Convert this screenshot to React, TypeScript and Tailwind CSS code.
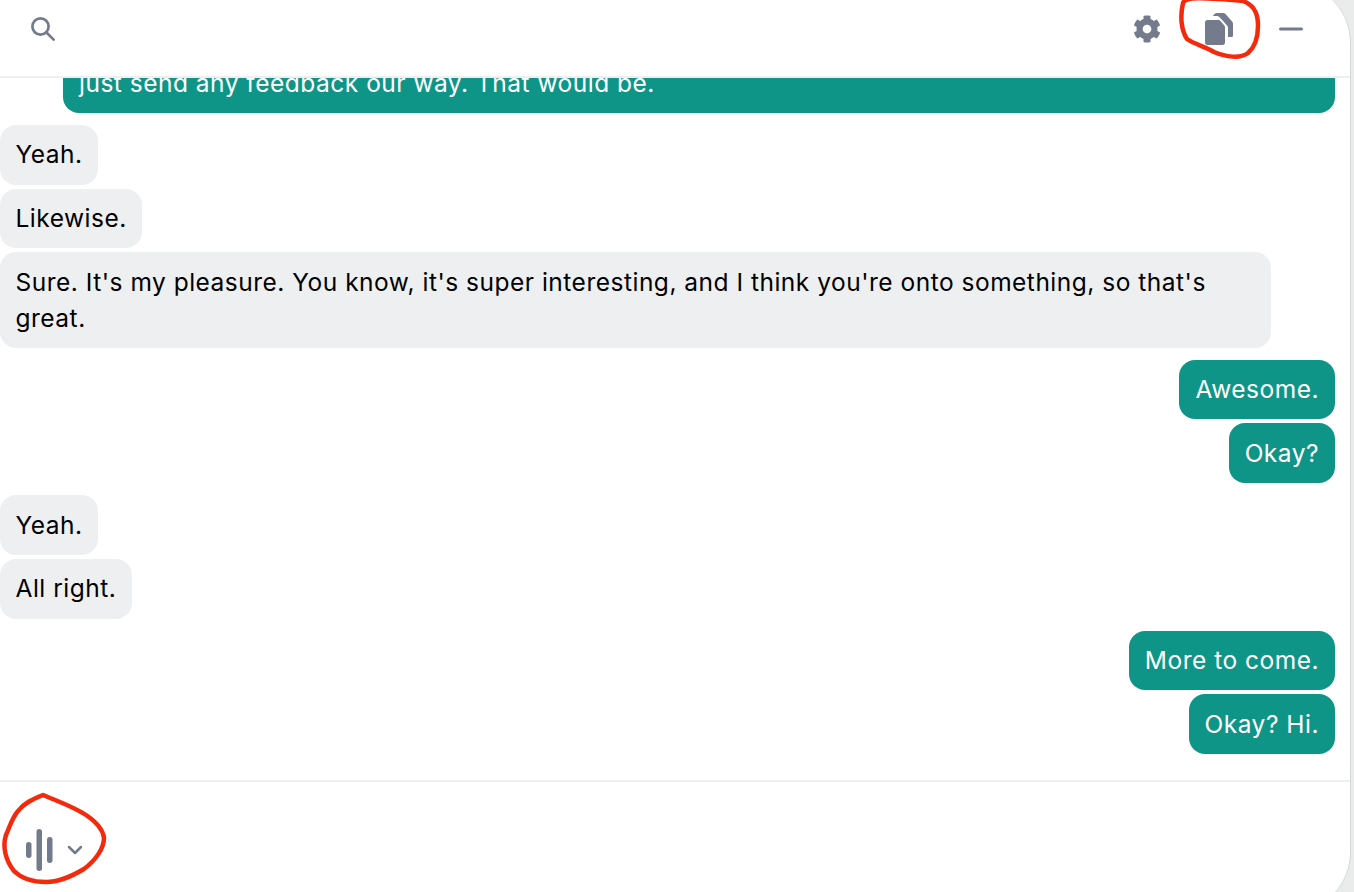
import { ChevronDown, Minus } from "lucide-react";
import { FaCog } from "react-icons/fa";

type Msg = { me: boolean; text: string };

const GROUPS: Msg[][] = [
  [{ me: false, text: "Yeah." }, { me: false, text: "Likewise." }, { me: false, text: "Sure. It's my pleasure. You know, it's super interesting, and I think you're onto something, so that's great." }],
  [{ me: true, text: "Awesome." }, { me: true, text: "Okay?" }],
  [{ me: false, text: "Yeah." }, { me: false, text: "All right." }],
  [{ me: true, text: "More to come." }, { me: true, text: "Okay? Hi." }],
];

function Bubble({ me, text }: Msg) {
  return (
    <div className={me ? "self-end rounded-2xl bg-[#0f9588] px-4 pb-[11.5px] pt-[12.5px] text-white" : "max-w-[1271px] self-start rounded-2xl bg-[#eeeff1] px-[15.5px] pb-[11.5px] pt-[12.5px] text-black"}>
      {text}
    </div>
  );
}

export default function App() {
  return (
    <div className="h-[892px] w-[1354px] overflow-hidden bg-[#e9ecea] font-['Inter',sans-serif]">
      <div className="relative -mt-[17px] flex h-[929px] w-[1351px] flex-col overflow-hidden rounded-r-[60px] border-r border-[#d4d8d6] bg-white">
        {/* Toolbar */}
        <div className="flex h-[95px] shrink-0 items-center border-b-2 border-[#eeeff1] pb-[18px] pl-[31px] pr-[41px] pt-[17px] text-[#737b8c]">
          <svg viewBox="0 0 24 24" className="h-6 w-6" fill="none" stroke="currentColor" strokeWidth="2.7" strokeLinecap="round">
            <circle cx="9.5" cy="9.5" r="8.1" />
            <path d="M15.5 15.5 22.6 22.6" />
          </svg>
          <div className="ml-auto flex items-center">
            <FaCog className="h-7 w-7" />
            <svg viewBox="0 0 28 32" className="ml-11 h-8 w-7" fill="currentColor">
              <path d="M2.5 7H13.5c.8 0 1.5.3 2 .9l3.600 4.400c.6.7.9 1.400.9 2.200V29.500c0 1.500-1 2.500-2.500 2.500h-15C1 32 0 31 0 29.500v-20C0 8 1 7 2.500 7z" />
              <path d="M8 3C9 1 10.500 0 12 0h6.500c.8 0 1.400.3 2 .9l6.600 7.600c.6.6.9 1.300.9 2.100V22.500c0 .9-.6 1.500-1.500 1.500H23V14.500c0-.8-.3-1.500-.9-2.100L14.400 4C13.600 3.300 12.800 3 12 3z" />
            </svg>
            <Minus className="ml-10 h-9 w-9" strokeWidth={2} />
          </div>
        </div>

        {/* Transcript */}
        <div className="flex min-h-0 flex-1 flex-col justify-end gap-3 overflow-hidden pb-[26px] pr-[15px] text-[24.5px] leading-[35.7px] tracking-[0.5px]">
          <div className="ml-[63px] rounded-b-2xl bg-[#0f9588] px-4 pb-[11.5px] pt-[12.5px] text-white">
            just send any feedback our way. That would be.
          </div>
          {GROUPS.map((group, i) => (
            <div key={i} className="flex flex-col gap-1">
              {group.map((m, j) => (
                <Bubble key={j} {...m} />
              ))}
            </div>
          ))}
        </div>

        {/* Footer */}
        <div className="flex h-[132px] shrink-0 items-start border-t-2 border-[#eeeff1] pl-[26px] pt-[47px] text-[#737b8c]">
          <svg viewBox="0 0 27 42" className="h-[42px] w-[27px]" fill="currentColor">
            <rect x="0" y="13" width="5.500" height="16" rx="2.750" />
            <rect x="10.500" y="0" width="5.500" height="42" rx="2.750" />
            <rect x="21" y="8" width="5.500" height="26" rx="2.750" />
          </svg>
          <ChevronDown className="ml-[10px] mt-[9px] h-6 w-6" strokeWidth={2.5} />
        </div>

        {/* Hand-drawn annotations */}
        <svg className="pointer-events-none absolute left-0 top-[17px]" width="1354" height="892" fill="none" stroke="#f52a0c" strokeWidth="4.500" strokeLinecap="round" strokeLinejoin="round">
          <path d="M1243 1C1256 6 1258 16 1258 26C1258 36 1256 46 1248 53C1240 59 1226 57 1214 52C1206 47 1194 44 1187 39C1181 30 1180 16 1183 3C1185-3 1200-3 1243 1Z" />
          <path d="M43 795C33 799 24 803 18 811C12 818 10 826 6 835C2 847 6 861 14 871C22 879 34 882 46 882C60 882 72 876 84 869C96 860 104 848 104 838C103 829 95 821 86 815C72 806 57 801 43 795Z" />
        </svg>
      </div>
    </div>
  );
}
